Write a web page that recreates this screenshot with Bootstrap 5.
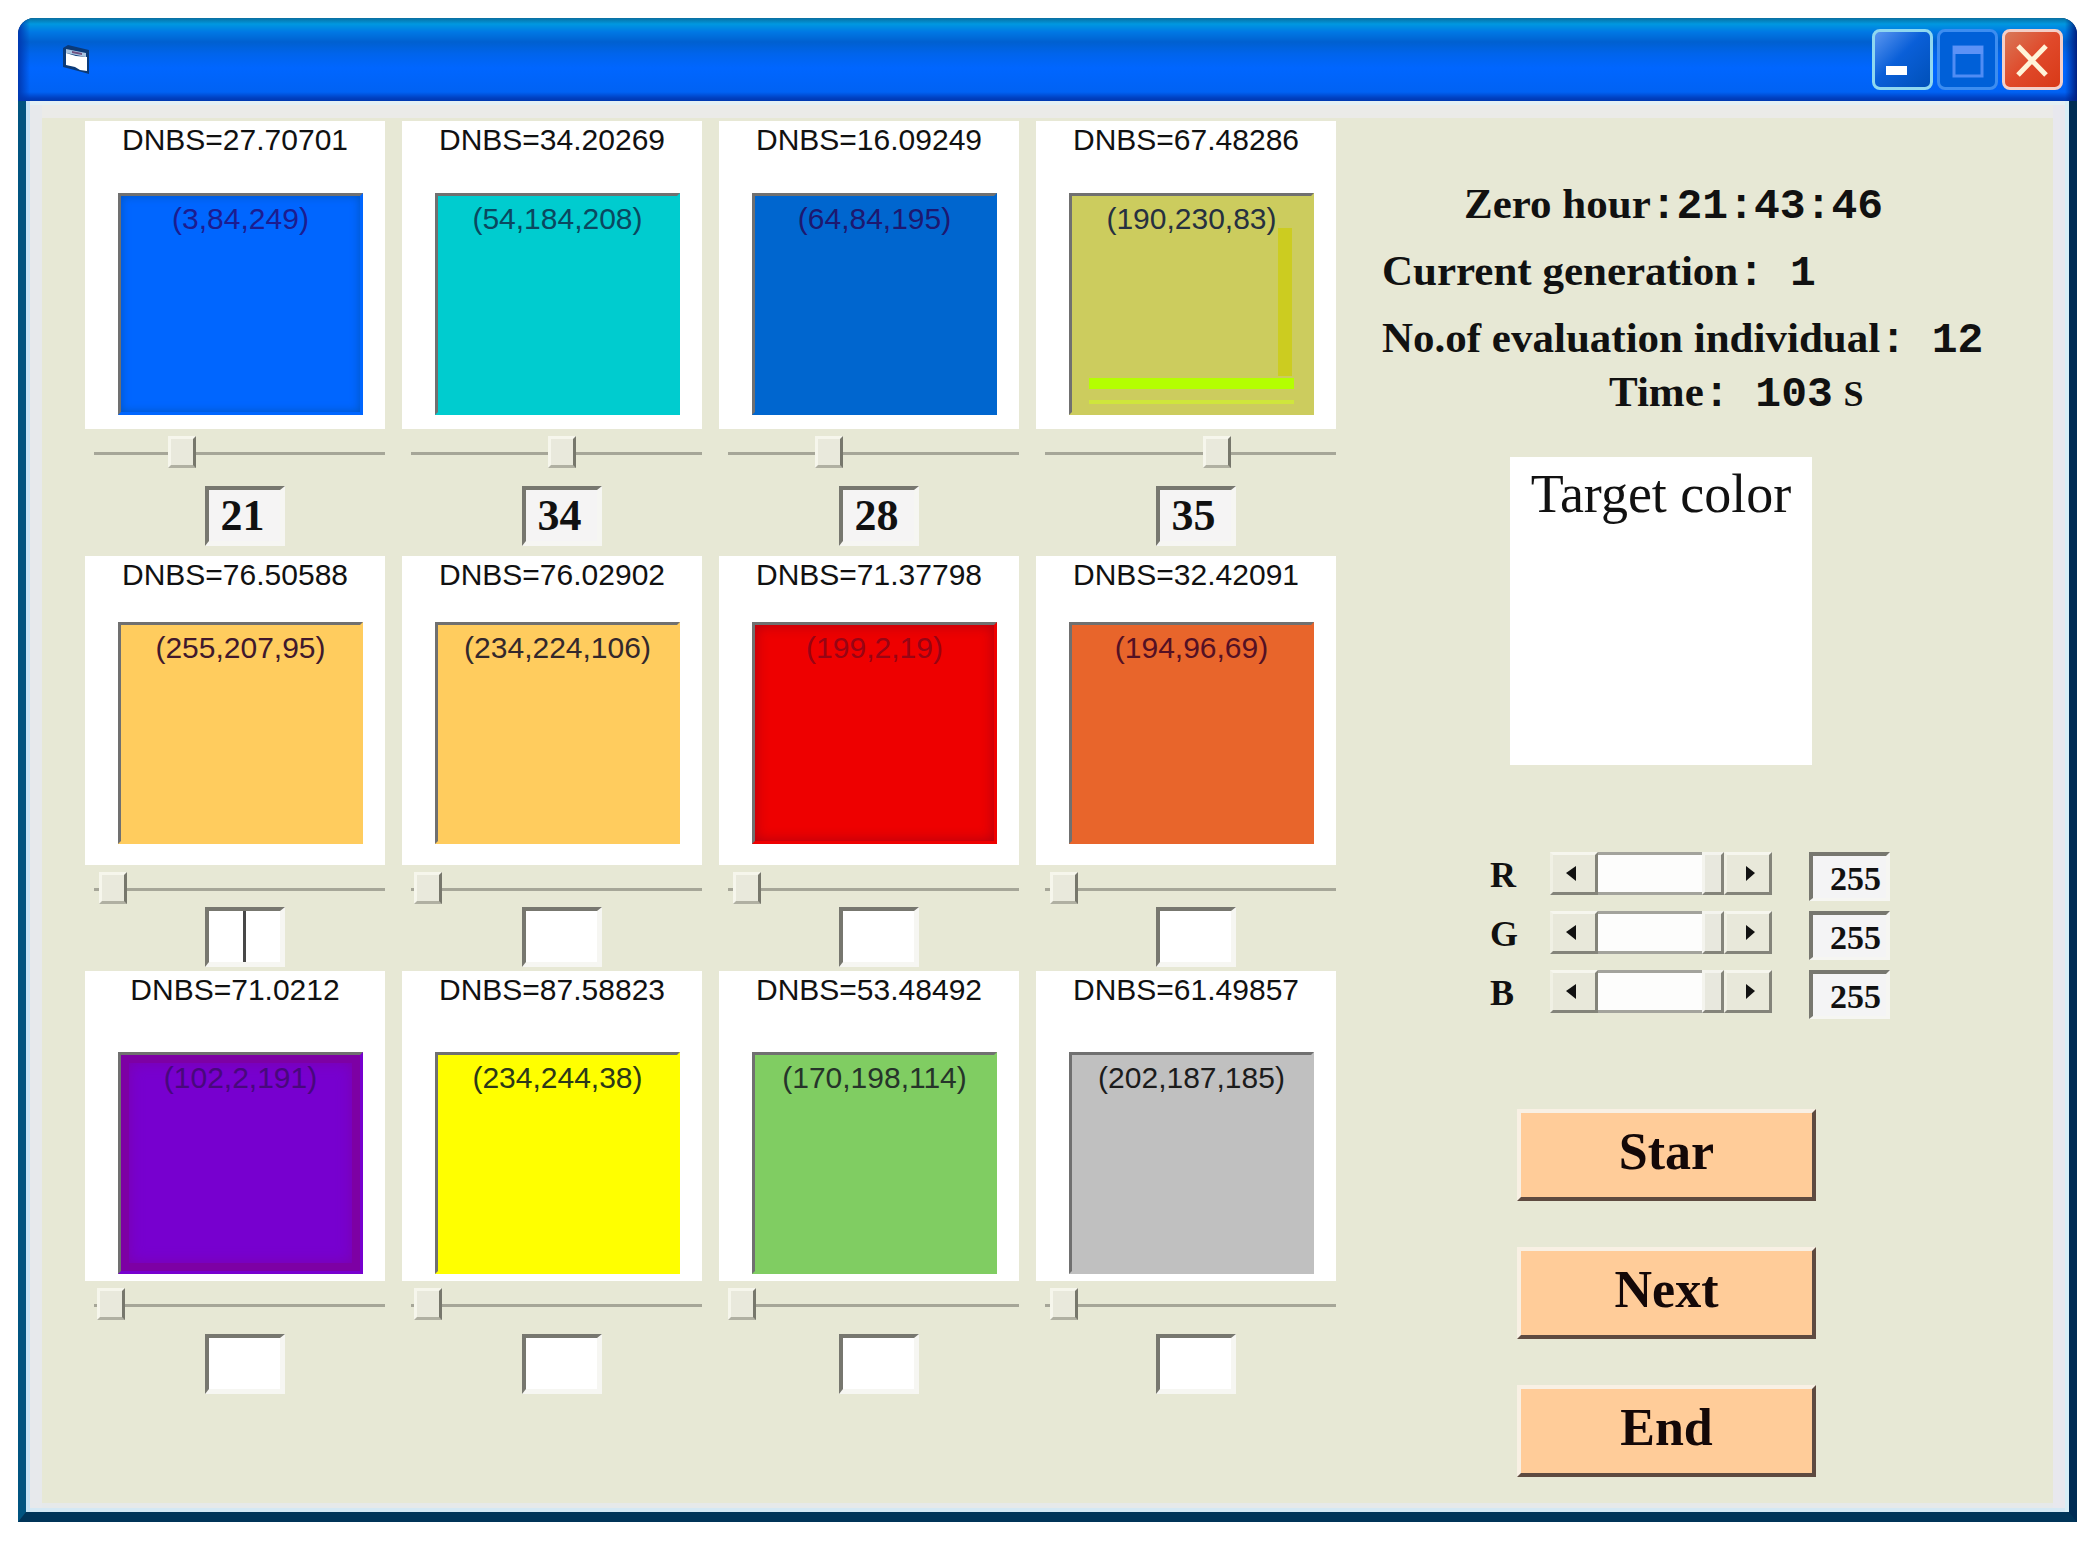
<!DOCTYPE html>
<html lang="en">
<head>
<meta charset="utf-8">
<meta name="viewport" content="width=device-width, initial-scale=1">
<title>Color evaluation</title>
<link href="https://cdn.jsdelivr.net/npm/bootstrap@5.3.0/dist/css/bootstrap.min.css" rel="stylesheet">
<style>
  body { background: #fff; padding: 18px 15px 18px 18px; color: #111; font-family: "Liberation Sans", Arial, sans-serif; }
  .serif { font-family: "Liberation Serif", "Times New Roman", serif; }
  .digits { font-family: "Liberation Mono", "Courier New", monospace; }

  /* window frame */
  .win { border-radius: 16px 16px 0 0; background: #003c66; }
  .titlebar { height: 83px; padding: 0 14px 0 44px; border-radius: 16px 16px 0 0;
    background: linear-gradient(90deg, #0038b0 0, transparent 12px, transparent calc(100% - 12px), #001f80 100%),
      linear-gradient(#0a6fa0 0, #0098e0 6px, #0078e4 14px, #0060d0 24px, #0064ec 36px, #0066ff 50px, #0062f4 74px, #0040c0 80px, #0038b0 83px); }
  .winbtn { width: 61px; height: 61px; padding: 0; border: 3px solid #8fd8f0; border-radius: 8px; background: linear-gradient(135deg, #5a96f0, #0a5fd8 45%, #0050b8); }
  .winbtn svg { display: block; width: 55px; height: 55px; }
  .winbtn-max { border-color: #3d8df0; background: #0060d8; }
  .winbtn-close { border-color: #f4cfc8; background: linear-gradient(135deg, #d87858, #e0492a 50%, #d83a18); }
  .frame { border: solid; border-width: 0 8px 10px; border-color: #003c66 #002c54 #003458 #005480; }
  .client { padding: 20px 0 35px 59px; gap: 42px; background: #e7e8d5;
    box-shadow: inset 4px 0 #c6e4f6, inset -4px 0 #d8eef6, inset 0 -4px #d4e8f4, inset 0 4px #e4f0f4,
      inset 16px 0 #e7e9ec, inset -16px 0 #e8e8ee, inset 0 -9px #e6e9ea, inset 0 17px #ebebe8; }

  /* candidates */
  .grid-pane { flex: 1251 1 0; min-width: 0; }
  .panel-pane { flex: 691 1 0; min-width: 0; }
  .cells { --bs-gutter-x: 17px; --bs-gutter-y: 0; }
  .tile { background: #fff; padding: 0 22px 0 33px; }
  .tile-name { display: block; margin: 0 -22px 0 -33px; text-align: center; font-size: 30px; line-height: 38px; white-space: nowrap; }
  .swatch { height: 222px; padding-top: 5px; border: solid 3px; border-color: #707070 transparent transparent #707070; background-clip: border-box; background-origin: border-box; text-align: center; font-size: 30px; line-height: 36px; white-space: nowrap; }
  .gen-a .tile { padding-bottom: 14px; } .gen-a .tile-name { margin-bottom: 34px; }
  .gen-b .tile { padding-bottom: 21px; } .gen-b .tile-name { margin-bottom: 28px; }
  .gen-c .tile { padding-bottom: 7px; } .gen-c .tile-name { margin-bottom: 43px; }
  .gen-a .slide { margin-top: 7px; margin-bottom: 18px; }
  .gen-b .slide { margin-top: 7px; margin-bottom: 3px; }
  .gen-c .slide { margin-top: 7px; margin-bottom: 14px; }
  .gen-a { padding-bottom: 10px; }
  .gen-b { padding-bottom: 4px; }

  .slide { display: block; width: calc(100% - 9px); height: 32px; margin-left: 9px; appearance: none; background: linear-gradient(#a6a698, #a6a698) 0 16px / 100% 3px no-repeat; }
  .slide::-webkit-slider-thumb { appearance: none; width: 28px; height: 32px; border: solid; border-width: 3px; border-color: #f6f6ec #77776c #b0b0a2 #f6f6ec; background: #e9e9dc; }

  .score { display: block; width: 80px; height: 60px; margin-left: 120px; padding: 0 4px 0 0; border: solid; border-width: 4px 5px 5px 4px; border-color: #77776f #f6f6f2 #f6f6f2 #77776f; border-radius: 0; background: #fff; text-align: center; font-size: 44px; line-height: 48px; font-weight: 700; color: #111; }
  .score-set { background: #f5f4f4; }
  .score-active { background: linear-gradient(#484848, #484848) center / 3px 100% no-repeat #fff; }

  .c1 { background-color: #0066ff; color: #1c1c90; box-shadow: inset 0 0 10px #0055c0; }
  .c2 { background-color: #00cccf; color: #0a4860; }
  .c3 { background-color: #0066cf; color: #1d1870; }
  .c4 { background-color: #cccc5e; color: #263040;
    background-image: linear-gradient(#cccc20, #cccc20), linear-gradient(#b4ff00, #b4ff00), linear-gradient(#cfe63c, #cfe63c);
    background-repeat: no-repeat; background-size: 14px 148px, calc(100% - 40px) 11px, calc(100% - 40px) 4px; background-position: right 22px top 35px, 20px 185px, 20px 207px; }
  .c5 { background-color: #ffcc5e; color: #40182c; }
  .c6 { background-color: #ffcc5e; color: #33282c; }
  .c7 { background-color: #ee0000; color: #980414; box-shadow: inset 0 0 14px #b00010; }
  .c8 { background-color: #e8652b; color: #541024; }
  .c9 { background-color: #7700cf; color: #48087c; box-shadow: inset 0 0 0 8px #7d00a4, inset 0 0 16px 6px #7d00a4; }
  .c10 { background-color: #ffff00; color: #2c3818; }
  .c11 { background-color: #80cd62; color: #26342a; }
  .c12 { background-color: #c0c0c0; color: #1c1c1c; }

  /* status panel */
  .status { padding-top: 58px; }
  .status div { height: 50px; font-size: 43px; line-height: 50px; font-weight: 700; white-space: pre; }
  .s-zero { margin: 0 0 17px 86px; }
  .s-gen { margin: 0 0 17px 4px; }
  .s-count { margin: 0 0 4px 4px; }
  .s-time { margin: 0 0 40px 231px; }
  .unit { font-size: 36px; }
  .target { width: 302px; height: 308px; margin-left: 132px; padding-top: 7px; background: #fff; text-align: center; font-size: 54px; line-height: 60px; }
  .channels { margin: 87px 0 92px 112px; gap: 12px; }
  .channel { height: 47px; }
  .channel label { width: 60px; font-size: 36px; line-height: 46px; font-weight: 700; }
  .bar { width: 222px; height: 43px; margin-right: 37px; background: #fff; }
  .arrow { width: 48px; padding: 0; border: 3px solid; border-color: #f6f6ee #84847a #84847a #f0f0e4; background: #e8e8da; }
  .arrow svg { display: block; width: 100%; height: 100%; }
  .level { flex: 1 1 0; min-width: 0; height: 43px; margin: 0; appearance: none; background: #fdfdfc; border: solid #a3a39c; border-width: 3px 0; }
  .level::-webkit-slider-thumb { appearance: none; width: 22px; height: 43px; border: 3px solid; border-color: #f4f4ee #84847a #84847a #f4f4ee; background: #e8e8de; }
  .value { width: 81px; height: 49px; padding: 4px 5px 0 0; border: solid; border-width: 4px 4px 3px; border-color: #77776f #f6f6f2 #f6f6f2 #77776f; border-radius: 0; background: #f4f4f5; text-align: right; font-size: 34px; line-height: 38px; font-weight: 700; color: #111; }
  .actions { gap: 46px; margin-left: 139px; }
  .action { width: 299px; height: 92px; padding: 0 0 6px; border: solid 4px; border-color: #f8f0e4 #5e4a40 #5e4a40 #f8f0e4; border-radius: 0; background: #ffcc99; font-size: 52px; line-height: 60px; font-weight: 700; color: #140808; }
</style>
<script src="https://cdn.jsdelivr.net/npm/bootstrap@5.3.0/dist/js/bootstrap.bundle.min.js"></script>
</head>
<body>
<div class="win">
  <header class="titlebar d-flex align-items-center justify-content-between">
    <svg width="30" height="32" viewBox="0 0 30 32" aria-hidden="true">
      <path d="M1 4 L6 1 L27 6 V30 L20 28 L1 23 Z" fill="#0b3a78"/>
      <path d="M4 5 L24 9 V13 L4 9 Z" fill="#a8c4e0"/>
      <path d="M4 9 L14 12 L25 13 V27 L18 26 L13 23 L4 21 Z" fill="#fff"/>
      <path d="M10 7 L20 9 V11 L10 9 Z" fill="#705080"/>
    </svg>
    <div class="d-flex gap-1">
      <button class="winbtn" type="button" aria-label="Minimize"><svg viewBox="0 0 55 55"><rect x="11" y="34" width="21" height="9" fill="#fff"/></svg></button>
      <button class="winbtn winbtn-max" type="button" aria-label="Maximize"><svg viewBox="0 0 55 55"><path d="M14 15H42V44H14Z" fill="none" stroke="#4f8cf4" stroke-width="3"/><path d="M13 14H43V22H13Z" fill="#5c92f6"/></svg></button>
      <button class="winbtn winbtn-close" type="button" aria-label="Close"><svg viewBox="0 0 55 55"><path d="M13 14L41 43M41 14L13 43" stroke="#fff4d8" stroke-width="5"/></svg></button>
    </div>
  </header>
  <div class="frame">
    <main class="client d-flex align-items-start">
      <section class="grid-pane">
        <div class="row row-cols-4 cells gen-a">
          <div class="col"><div class="tile"><label class="tile-name" for="r1">DNBS=27.70701</label><div class="swatch c1">(3,84,249)</div></div><input id="r1" class="slide" type="range" value="28"><input class="score score-set serif" type="text" value="21" aria-label="Score 1"></div>
          <div class="col"><div class="tile"><label class="tile-name" for="r2">DNBS=34.20269</label><div class="swatch c2">(54,184,208)</div></div><input id="r2" class="slide" type="range" value="52"><input class="score score-set serif" type="text" value="34" aria-label="Score 2"></div>
          <div class="col"><div class="tile"><label class="tile-name" for="r3">DNBS=16.09249</label><div class="swatch c3">(64,84,195)</div></div><input id="r3" class="slide" type="range" value="33"><input class="score score-set serif" type="text" value="28" aria-label="Score 3"></div>
          <div class="col"><div class="tile"><label class="tile-name" for="r4">DNBS=67.48286</label><div class="swatch c4">(190,230,83)</div></div><input id="r4" class="slide" type="range" value="60"><input class="score score-set serif" type="text" value="35" aria-label="Score 4"></div>
        </div>
        <div class="row row-cols-4 cells gen-b">
          <div class="col"><div class="tile"><label class="tile-name" for="r5">DNBS=76.50588</label><div class="swatch c5">(255,207,95)</div></div><input id="r5" class="slide" type="range" value="2"><input class="score score-active serif" type="text" aria-label="Score 5"></div>
          <div class="col"><div class="tile"><label class="tile-name" for="r6">DNBS=76.02902</label><div class="swatch c6">(234,224,106)</div></div><input id="r6" class="slide" type="range" value="1"><input class="score serif" type="text" aria-label="Score 6"></div>
          <div class="col"><div class="tile"><label class="tile-name" for="r7">DNBS=71.37798</label><div class="swatch c7">(199,2,19)</div></div><input id="r7" class="slide" type="range" value="2"><input class="score serif" type="text" aria-label="Score 7"></div>
          <div class="col"><div class="tile"><label class="tile-name" for="r8">DNBS=32.42091</label><div class="swatch c8">(194,96,69)</div></div><input id="r8" class="slide" type="range" value="2"><input class="score serif" type="text" aria-label="Score 8"></div>
        </div>
        <div class="row row-cols-4 cells gen-c">
          <div class="col"><div class="tile"><label class="tile-name" for="r9">DNBS=71.0212</label><div class="swatch c9">(102,2,191)</div></div><input id="r9" class="slide" type="range" value="1"><input class="score serif" type="text" aria-label="Score 9"></div>
          <div class="col"><div class="tile"><label class="tile-name" for="r10">DNBS=87.58823</label><div class="swatch c10">(234,244,38)</div></div><input id="r10" class="slide" type="range" value="1"><input class="score serif" type="text" aria-label="Score 10"></div>
          <div class="col"><div class="tile"><label class="tile-name" for="r11">DNBS=53.48492</label><div class="swatch c11">(170,198,114)</div></div><input id="r11" class="slide" type="range" value="0"><input class="score serif" type="text" aria-label="Score 11"></div>
          <div class="col"><div class="tile"><label class="tile-name" for="r12">DNBS=61.49857</label><div class="swatch c12">(202,187,185)</div></div><input id="r12" class="slide" type="range" value="2"><input class="score serif" type="text" aria-label="Score 12"></div>
        </div>
      </section>
      <aside class="panel-pane serif">
        <div class="status">
          <div class="s-zero">Zero hour<span class="digits">:21:43:46</span></div>
          <div class="s-gen">Current generation<span class="digits">: 1</span></div>
          <div class="s-count">No.of evaluation individual<span class="digits">: 12</span></div>
          <div class="s-time">Time<span class="digits">: 103</span> <span class="unit">S</span></div>
        </div>
        <div class="target">Target color</div>
        <div class="channels d-flex flex-column">
          <div class="channel d-flex align-items-start">
            <label for="chR">R</label>
            <div class="bar d-flex"><button class="arrow" type="button" aria-label="Less red"><svg viewBox="0 0 42 37"><path d="M23 11V26L13 18Z" fill="#111"/></svg></button><input id="chR" class="level" type="range" max="255" value="255"><button class="arrow" type="button" aria-label="More red"><svg viewBox="0 0 42 37"><path d="M19 11V26L28 18Z" fill="#111"/></svg></button></div>
            <input class="value serif" type="text" value="255" aria-label="Red value">
          </div>
          <div class="channel d-flex align-items-start">
            <label for="chG">G</label>
            <div class="bar d-flex"><button class="arrow" type="button" aria-label="Less green"><svg viewBox="0 0 42 37"><path d="M23 11V26L13 18Z" fill="#111"/></svg></button><input id="chG" class="level" type="range" max="255" value="255"><button class="arrow" type="button" aria-label="More green"><svg viewBox="0 0 42 37"><path d="M19 11V26L28 18Z" fill="#111"/></svg></button></div>
            <input class="value serif" type="text" value="255" aria-label="Green value">
          </div>
          <div class="channel d-flex align-items-start">
            <label for="chB">B</label>
            <div class="bar d-flex"><button class="arrow" type="button" aria-label="Less blue"><svg viewBox="0 0 42 37"><path d="M23 11V26L13 18Z" fill="#111"/></svg></button><input id="chB" class="level" type="range" max="255" value="255"><button class="arrow" type="button" aria-label="More blue"><svg viewBox="0 0 42 37"><path d="M19 11V26L28 18Z" fill="#111"/></svg></button></div>
            <input class="value serif" type="text" value="255" aria-label="Blue value">
          </div>
        </div>
        <div class="actions d-flex flex-column">
          <button class="action" type="button">Star</button>
          <button class="action" type="button">Next</button>
          <button class="action" type="button">End</button>
        </div>
      </aside>
    </main>
  </div>
</div>
</body>
</html>
